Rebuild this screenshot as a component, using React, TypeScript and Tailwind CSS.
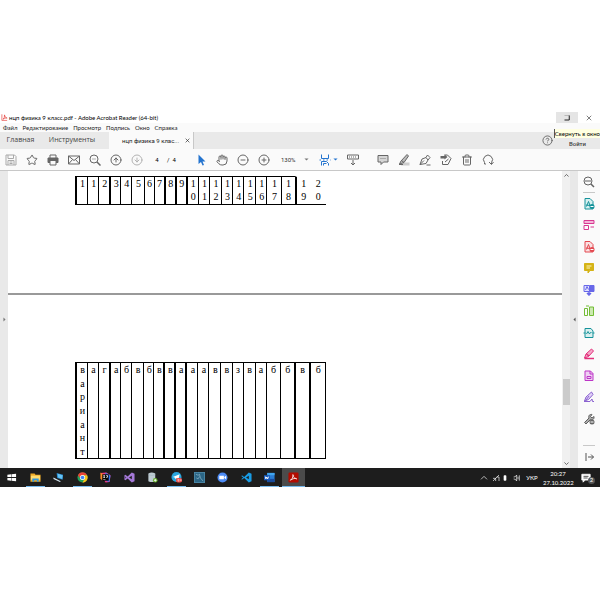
import React from 'react';
import { Star, Hand, CircleMinus, CirclePlus, CircleArrowUp, CircleArrowDown, Trash2, CircleHelp } from 'lucide-react';

type P = { children: React.ReactNode; size?: string; vb?: string; c?: string };

function Icon({ children, size = 'size-3', vb = '0 0 24 24', c = '' }: P) {
  return (
    <svg viewBox={vb} className={`${size} ${c} shrink-0`} fill="none" stroke="currentColor" strokeWidth="2" aria-hidden="true">
      {children}
    </svg>
  );
}

function Tool({ label, children, c = 'text-[#666]' }: { label: string; children: React.ReactNode; c?: string }) {
  return (
    <button aria-label={label} className={`flex h-5 w-[21px] shrink-0 items-center justify-center ${c}`}>
      {children}
    </button>
  );
}

const columns = [
  ['w-3', '1', 'вариант', true],
  ['w-[11px]', '1', 'а', false],
  ['w-[11px]', '2', 'г', false],
  ['w-[11px]', '3', 'а', true],
  ['w-[11px]', '4', 'б', false],
  ['w-3', '5', 'в', false],
  ['w-[10px]', '6', 'б', false],
  ['w-[10px]', '7', 'в', false],
  ['w-[11px]', '8', 'в', true],
  ['w-[11px]', '9', 'а', true],
  ['w-3', '10', 'а', true],
  ['w-[11px]', '11', 'а', false],
  ['w-3', '12', 'в', false],
  ['w-[11px]', '13', 'в', false],
  ['w-[11px]', '14', 'з', false],
  ['w-3', '15', 'в', false],
  ['w-[11px]', '16', 'а', false],
  ['w-[14px]', '17', 'б', false],
  ['w-[14px]', '18', 'б', false],
  ['w-[15px]', '19', 'в', true],
  ['w-4', '20', 'б', true],
] as const;

function Cells({ kind }: { kind: 'numbers' | 'answers' }) {
  const numbers = kind === 'numbers';
  return (
    <table className={`ml-[67px] w-[251px] table-fixed border-separate border-spacing-0 border-b border-black font-['Liberation_Serif',serif] text-[10px] text-black ${numbers ? '' : 'border-r border-t'}`}>
      <colgroup>
        {columns.map((col, i) => <col key={i} className={col[0]} />)}
      </colgroup>
      <tbody>
        <tr>
          {columns.map(([, n, a, thick], i) => {
            const edge = numbers && i === 20 ? 'border-l-0' : thick ? 'border-l-2' : 'border-l';
            const top = !numbers ? '' : i < 19 ? 'border-t' : 'border-t border-t-transparent';
            const text = numbers ? n : a;
            return (
              <td key={i} className={`border-black p-0 pl-px text-center align-top leading-[13px] ${edge} ${top}`}>
                <div className={numbers ? 'h-[27px]' : 'flex h-[95px] flex-col justify-between'}>
                  {text.split('').map((ch, j) => <span key={j} className="block">{ch}</span>)}
                </div>
              </td>
            );
          })}
        </tr>
      </tbody>
    </table>
  );
}

const page = <path d="M4 1h10l6 6v15H4z" />;

function SideTools() {
  const items: [string, string, React.ReactNode][] = [
    ['Экспорт PDF', 'text-[#14929a]', <><g fill="#d5efef">{page}</g><path d="m7 17 4-10 3 8-8-1" /><circle cx="18" cy="17" r="5" fill="currentColor" stroke="none" /><path d="M15 17h6" stroke="#fff" /></>],
    ['Редактировать PDF', 'text-[#d83790]', <><path d="M2 3h20v6H2z" fill="#f4b5d8" /><path d="M2 13h9v8H2zM15 16h7" /></>],
    ['Создать PDF', 'text-[#e34850]', <><g fill="#fadfe0">{page}</g><path d="m7 17 4-10 3 8-8-1" /><circle cx="18" cy="17" r="5" fill="currentColor" stroke="none" /><path d="M15 17h6" stroke="#fff" /></>],
    ['Комментарий', 'text-[#d5b316]', <><path d="M3 3h18v14h-7l-4 5v-5H3z" fill="currentColor" /><path d="M7 8h10M7 12h7" stroke="#fff7bd" /></>],
    ['Объединить файлы', 'text-[#6767e8]', <><path d="M2 3h11v12H2z" fill="#dedeff" /><path d="M14 3h8v12h-8z" fill="currentColor" /><path d="m5 12 3-7 3 6" /><path d="M12 14v8m-4-4 4 4 4-4" strokeWidth="3" /></>],
    ['Упорядочить страницы', 'text-[#73bc35]', <><path d="M13 4h8v17h-8z" fill="#cbe9b0" /><path d="M9 7H3v14h6V7M6 2h6" /></>],
    ['Сжать PDF', 'text-[#14929a]', <><path d="M4 3h12l4 5v13H4z" fill="#d9efee" /><path d="M1 12h4m14 0h4M7 14l3-5 3 5 2-3h2" /></>],
    ['Исправить', 'text-[#e3307b]', <><path d="m3 20 3-8L17 2l4 4-10 11z" fill="#f4a6c8" /><path d="M3 21h19M7 12l5 4" strokeWidth="3" /></>],
    ['Защитить', 'text-[#bd35c7]', <><path d="M4 2h11l5 5v14H4z" fill="#efcff2" /><path d="M14 2v6h6M8 13h8v4H8z" /></>],
    ['Заполнить и подписать', 'text-[#8b62d0]', <><path d="m3 20 3-8L17 2l3 5-9 10z" fill="#e0d1f7" /><path d="m6 18 6-8M2 21h12l4-5 1 5h3" /></>],
    ['Другие инструменты', 'text-[#606060]', <><path d="M3 19 12 10c-2-5 2-8 6-7l-3 4 3 3 4-3c1 5-3 8-7 6l-9 9z" fill="#aaa" /><circle cx="18" cy="18" r="5" fill="#666" stroke="none" /><path d="M15 18h6" stroke="#fff" /></>],
  ];
  return (
    <aside className="flex w-[22px] shrink-0 flex-col items-center bg-[#fafafa]">
      <button aria-label="Поиск инструментов" className="flex h-[21px] items-center text-[#626262]">
        <Icon><circle cx="10" cy="10" r="8" /><path d="m16 16 6 6" strokeWidth="3" /><path d="M6 8v4m4-4v4m4-4v4" /></Icon>
      </button>
      <hr className="w-3 border-[#c8c8c8]" />
      <div className="flex h-[236px] flex-col justify-between">
        {items.map(([name, color, drawing]) => (
          <button key={name} aria-label={name} className={`flex h-[21px] items-center ${color}`}><Icon>{drawing}</Icon></button>
        ))}
      </div>
      <hr className="mt-4 w-3 border-[#c8c8c8]" />
      <button aria-label="Свернуть панель" className="mt-[5px] text-[#555]"><Icon><path d="M6 4v16M10 12h11m-5-5 5 5-5 5" /></Icon></button>
    </aside>
  );
}

function Taskbar() {
  const apps: [string, boolean, React.ReactNode][] = [
    ['Пуск', false, <path key="a" d="M3 6 11 5v6H3zm9-1 10-1v7H12zM3 13h8v6l-8-1zm9 0h10v7l-10-1z" fill="#fff" stroke="none" />],
    ['Проводник', true, <g key="a" stroke="none"><path d="M1 3h9l2 3h11v15H1z" fill="#efaa24" /><path d="M2 8h20v9H2z" fill="#ffdc70" /><path d="M5 14h14v7h-4v-3H9v3H5z" fill="#3498db" /></g>],
    ['Этот компьютер', false, <g key="a" stroke="none"><path d="m8 2 14 4-1 11-12-4z" fill="#2385cb" /><path d="m10 4 11 3-1 8-9-3z" fill="#68c4f3" /><path d="m1 12 16 8-2 2L1 15z" fill="#d4e5ef" /></g>],
    ['Chrome', true, <g key="a" stroke="none"><circle cx="12" cy="12" r="11" fill="#22a25a" /><path d="M2 7a11 11 0 0 1 20 0H12L7 14z" fill="#ea4335" /><path d="M22 7a11 11 0 0 1-10 16l5-9-5-7z" fill="#fbc116" /><circle cx="12" cy="12" r="5.5" fill="#fff" /><circle cx="12" cy="12" r="4" fill="#4285f4" /></g>],
    ['IntelliJ IDEA', false, <g key="a" stroke="none"><path d="m1 2 13-1 9 6-2 15-9 1z" fill="#f73883" /><path d="m12 1 11 7-3 14-8-3z" fill="#257cf4" /><path d="m1 1 8 5-4 13-4-5z" fill="#fb8a24" /><path d="M5 5h14v14H5z" fill="#050505" /><path d="M7 7h4v1h-1v4h1v1H7v-1h1V8H7zm6 0h4v5h-4v-1h2V8h-2zM7 16h5v1H7z" fill="#fff" /></g>],
    ['Visual Studio', false, <path key="a" d="m3 6 5 4L17 1l6 3v16l-6 3-9-9-5 4-2-1V7zm14 2-6 4 6 4zM3 10v4l2-2z" fill="#a579d8" fillRule="evenodd" stroke="none" />],
    ['База данных', false, <g key="a" stroke="none"><path d="M3 3q7-4 15 0v17q-7 4-15 0z" fill="#becbd2" /><path d="M3 6q7 3 15 0" stroke="#9aabb6" strokeWidth="1" /><circle cx="18" cy="18" r="5" fill="#61aa26" /><path d="M15 18h6m-3-3v6" stroke="#fff" /></g>],
    ['Telegram', true, <g key="a" stroke="none"><circle cx="12" cy="11" r="11" fill="#29a6df" /><path d="m4 11 15-6-3 12-5-4-2 3-1-4z" fill="#fff" /><rect x="11" y="13" width="13" height="10" rx="4" fill="#ed4845" /><path d="M14 16h3v2h-2v2h3m2-4v4m2-4v4" stroke="#fff" strokeWidth="1" /></g>],
    ['MySQL Workbench', false, <g key="a"><rect x="1" y="1" width="22" height="22" fill="#2b6585" stroke="#4b89a8" /><path d="m4 5 5 2 3-2 2 8 6 7M5 13l4 2 3-5" stroke="#c2dfeb" strokeWidth="1" /></g>],
    ['Zoom', false, <g key="a" stroke="none"><circle cx="12" cy="12" r="11" fill="#4c8bf5" /><path d="M5 8h10v8H5zm11 3 4-3v8l-4-3z" fill="#fff" /></g>],
    ['Visual Studio Code', false, <path key="a" d="m2 7 5 4L17 1l6 3v16l-6 3L7 13l-5 4-1-2 4-3-4-3zm15 1-6 4 6 4z" fill="#199ce5" fillRule="evenodd" stroke="none" />],
    ['Word', true, <g key="a" stroke="none"><path d="M7 2h16v20H7z" fill="#2b7cd3" /><path d="M7 2h16v5H7z" fill="#41a5ee" /><path d="M7 15h16v7H7z" fill="#174a9c" /><path d="M0 7h13v11H0z" fill="#185abd" /><path d="m3 10 1 5 2-4 2 4 2-5" stroke="#fff" fill="none" /></g>],
    ['Acrobat Reader', true, <g key="a"><rect x="1" y="1" width="22" height="22" rx="3" fill="#b30b00" stroke="none" /><path d="M5 18q5-3 7-11c-3-5-3 6 7 8-3-3-9 0-14 3z" stroke="#fff" strokeWidth="1.8" /></g>],
  ];
  return (
    <footer className="flex h-[19px] items-stretch bg-[#1d1d1d] text-white">
      <div className="flex w-[305px] shrink-0">
        {apps.map(([name, open, drawing], i) => (
          <button key={name} aria-label={name} className={`flex flex-1 flex-col items-center justify-between ${i === 12 ? 'bg-[#4b4b4b]' : ''}`}>
            <span className="flex flex-1 items-center"><Icon size="size-[11px]">{drawing}</Icon></span>
            <span className={`h-px ${i === 12 ? 'w-full' : 'w-[19px]'} ${open ? 'bg-[#76b9ed]' : ''}`} />
          </button>
        ))}
      </div>
      <div className="ml-auto flex items-center pr-[9px]">
        <Icon size="size-2"><path d="m3 16 9-9 9 9" /></Icon>
        <Icon size="size-2" c="ml-1"><path d="m3 21 18-18M3 13h8v8m3-12h7v12" /></Icon>
        <Icon size="size-2" c="ml-px"><path d="M9 5h6v14H9z" fill="white" /></Icon>
        <Icon size="size-2" c="ml-1"><path d="m2 9 5-1 4-5v18l-4-5-5-1M15 8v8m4-12v16" /></Icon>
        <span className="ml-1 w-[14px] text-center text-[6px]">УКР</span>
        <time className="ml-1 w-[30px] text-center text-[6px] leading-[9px]">20:27<br />27.10.2022</time>
        <span className="relative ml-2 flex">
          <Icon size="size-[10px]"><path d="M2 3h20v14H10l-5 5v-5H2z" fill="white" /><path d="M6 8h12M6 12h10" stroke="#333" /></Icon>
          <span className="absolute -right-1 top-1 flex size-[7px] items-center justify-center rounded-full bg-[#555] text-[6px] leading-none">2</span>
        </span>
      </div>
    </footer>
  );
}

export default function App() {
  return (
    <main className="min-h-screen bg-white py-28 font-['Lato','Liberation_Sans',sans-serif] text-[#222]">
      <header>
        <div className="flex h-[11px] items-center justify-between pl-px">
          <div className="flex items-center gap-px">
            <Icon size="size-[7px]" c="text-[#e22620]"><path d="M3 1v21h18M7 18q6-5 5-15 0 9 9 11-8-2-14 4" /></Icon>
            <h1 className="whitespace-nowrap text-[6px] leading-[11px] text-black">нцп физика 9 класс.pdf - Adobe Acrobat Reader (64-bit)</h1>
          </div>
          <div className="flex">
            <button aria-label="Свернуть в окно" className="flex h-[11px] w-[22px] items-center justify-center bg-[#e5e5e5] text-[#222]"><Icon size="size-[6px]"><path d="M2 2h19" stroke="#aaa" strokeWidth="3" /><path d="M21 2v18H2" strokeWidth="4" /></Icon></button>
            <button aria-label="Закрыть" className="flex h-[11px] w-[22px] items-center justify-center text-[#555]"><Icon size="size-[6px]"><path d="m3 3 18 18M3 21 21 3" strokeWidth="3" /></Icon></button>
          </div>
        </div>
        <nav className="flex h-[9px] gap-[5px] bg-[#fafafa] pl-[3px] text-[6px] leading-[9px]">
          {['Файл', 'Редактирование', 'Просмотр', 'Подпись', 'Окно', 'Справка'].map(t => <button key={t}>{t}</button>)}
        </nav>
        <div className="flex h-[17px] items-center bg-[#e9e9e9] text-[7px] text-[#444]">
          <button className="w-[41px] text-center font-['Open_Sans',sans-serif]">Главная</button>
          <button className="w-[62px] text-center font-['Open_Sans',sans-serif]">Инструменты</button>
          <div className="ml-[6px] flex h-full w-[85px] items-center border-r border-[#c8c8c8] bg-[#fafafa] pl-[13px] pr-[3px] text-[#222]">
            <button className="whitespace-nowrap font-['Roboto',sans-serif] text-[6px]">нцп физика 9 клас...</button>
            <button aria-label="Закрыть вкладку" className="ml-auto"><Icon size="size-[5px]"><path d="m3 3 18 18M3 21 21 3" strokeWidth="3" /></Icon></button>
          </div>
          <div className="relative ml-auto flex h-full w-[60px] items-center justify-between pl-0.5 pr-[11px]">
            <button aria-label="Справка"><CircleHelp className="size-[11px] text-[#666]" strokeWidth={2} /></button>
            <button className="w-[23px] self-end font-['Roboto',sans-serif] text-[6px] font-medium leading-[11px]">Войти</button>
            <span role="tooltip" className="absolute -top-[3px] right-0 h-[9px] whitespace-nowrap border-l border-[#555] bg-[#ffffe1] text-[6px] leading-[9px] text-black">Свернуть в окно</span>
          </div>
        </div>
        <div className="flex h-[22px] items-center border-b border-[#c8c8c8] bg-[#fafafa]">
          <Tool label="Сохранить" c="text-[#a9a9a9]"><Icon><path d="M2 2h17l3 3v17H2zM6 2v7h11V2M6 22v-9h12v9M9 16h6m-6 3h6" /></Icon></Tool>
          <Tool label="Избранное"><Star className="size-3" strokeWidth={2} /></Tool>
          <Tool label="Печать"><Icon><path d="M6 8V2h12v6" /><path d="M2 8h20v9H2z" fill="currentColor" /><path d="M6 13h12v9H6z" fill="#fafafa" /></Icon></Tool>
          <Tool label="Отправить"><Icon><path d="M1 4h22v16H1zm0 0 11 9L23 4M1 20l8-9m14 9-8-9" /></Icon></Tool>
          <Tool label="Найти"><Icon><circle cx="10" cy="10" r="8" /><path d="m16 16 7 7" strokeWidth="3" /><path d="M6 10h1m2 0h2m2 0h1" /></Icon></Tool>
          <Tool label="Предыдущая страница"><CircleArrowUp className="size-3" /></Tool>
          <Tool label="Следующая страница" c="text-[#b3b3b3]"><CircleArrowDown className="size-3" /></Tool>
          <div className="flex w-[43px] shrink-0 items-center font-['Roboto',sans-serif] text-[6px] leading-[9px] text-black">
            <input aria-label="Номер страницы" defaultValue="4" className="h-[9px] w-5 bg-transparent text-center text-[6px]" />
            <span className="whitespace-pre">/  4</span>
          </div>
          <Tool label="Выделение" c="text-[#2474cf]"><Icon><path d="M7 1v19l5-4 3 7 3-1-3-7h6z" fill="currentColor" stroke="none" /></Icon></Tool>
          <Tool label="Рука"><Hand className="size-3" strokeWidth={2} /></Tool>
          <Tool label="Уменьшить"><CircleMinus className="size-3" strokeWidth={2} /></Tool>
          <Tool label="Увеличить"><CirclePlus className="size-3" strokeWidth={2} /></Tool>
          <div className="flex w-[41px] shrink-0 items-center justify-between pl-[7px] pr-[6px]">
            <select aria-label="Масштаб" className="w-5 appearance-none bg-transparent font-['Roboto',sans-serif] text-[6px] text-[#333]"><option>130%</option></select>
            <Icon size="size-[5px]"><path d="m2 7 10 10L22 7z" fill="#777" stroke="none" /></Icon>
          </div>
          <button aria-label="По ширине" className="flex w-[27px] shrink-0 items-center justify-center gap-0.5 text-[#2474cf]">
            <Icon><path d="M5 1v8h14V1M1 12h3m4 0h3m4 0h3m4 0h1M5 23v-8h10l4 4v4M9 23v-4h6" /></Icon>
            <Icon size="size-[5px]"><path d="m2 7 10 10L22 7z" fill="currentColor" stroke="none" /></Icon>
          </button>
          <Tool label="Прокрутка"><Icon><path d="M1 2h22v8H1zM5 5v2m4-2v2m4-2v2m4-2v2M12 12v10m-4-4 4 4 4-4" /></Icon></Tool>
          <div className="ml-[9px] flex">
            <Tool label="Комментарий"><Icon><path d="M2 3h20v13h-9l-5 5v-5H2z" fill="#d5d5d5" /><path d="M6 9h12" stroke="#aaa" /></Icon></Tool>
            <Tool label="Маркер"><Icon><path d="M10 17h13v6H6z" fill="#ccc" stroke="none" /><path d="m3 20 3-6L18 1l3 3-9 13z" fill="#bbb" /><path d="m7 13 5 4M2 21h8" /></Icon></Tool>
            <Tool label="Подпись"><Icon><path d="m2 21 4-11 8-3 4 5-4 7zM2 21l8-8M14 7l3-5 5 5-4 5M15 22h8" /></Icon></Tool>
            <Tool label="Штамп"><Icon><path d="M9 2h6l7 7-6 12H5v-7" /><path d="M1 4h8V1l6 5-6 5V9H1z" fill="currentColor" stroke="none" /><path d="m10 16 7-6" /></Icon></Tool>
            <Tool label="Удалить"><Trash2 className="size-3" strokeWidth={2} /></Tool>
            <Tool label="Повернуть"><Icon><path d="M8 20H5v-3a9 9 0 1 1 14 0v3m-5-4 5 5 4-5" /></Icon></Tool>
          </div>
        </div>
      </header>
      <section className="flex h-[297px]">
        <button aria-label="Открыть панель навигации" className="flex w-2 shrink-0 items-center justify-center bg-[#e9e9e9]"><Icon size="size-[5px]"><path d="m7 2 10 10L7 22z" fill="#777" stroke="none" /></Icon></button>
        <article className="min-w-0 flex-1 overflow-hidden bg-white">
          <div className="h-[122px] pt-[5px]"><Cells kind="numbers" /></div>
          <hr className="h-0 border-t-2 border-[#999]" />
          <div className="pt-[67px]"><Cells kind="answers" /></div>
        </article>
        <div className="flex w-2 shrink-0 flex-col items-center bg-[#f0f0f0] py-0.5 text-[#555]">
          <Icon size="size-[5px]"><path d="m2 17 10-10 10 10" strokeWidth="4" /></Icon>
          <span className="mt-[201px] h-[26px] w-[7px] bg-[#cbcbcb]" />
          <Icon size="size-[5px]" c="mt-auto"><path d="m2 7 10 10L22 7" strokeWidth="4" /></Icon>
        </div>
        <button aria-label="Скрыть инструменты" className="flex w-2 shrink-0 items-center justify-center bg-[#e8e8e8]"><Icon size="size-[5px]"><path d="M17 2 7 12l10 10z" fill="#555" stroke="none" /></Icon></button>
        <SideTools />
      </section>
      <Taskbar />
    </main>
  );
}
